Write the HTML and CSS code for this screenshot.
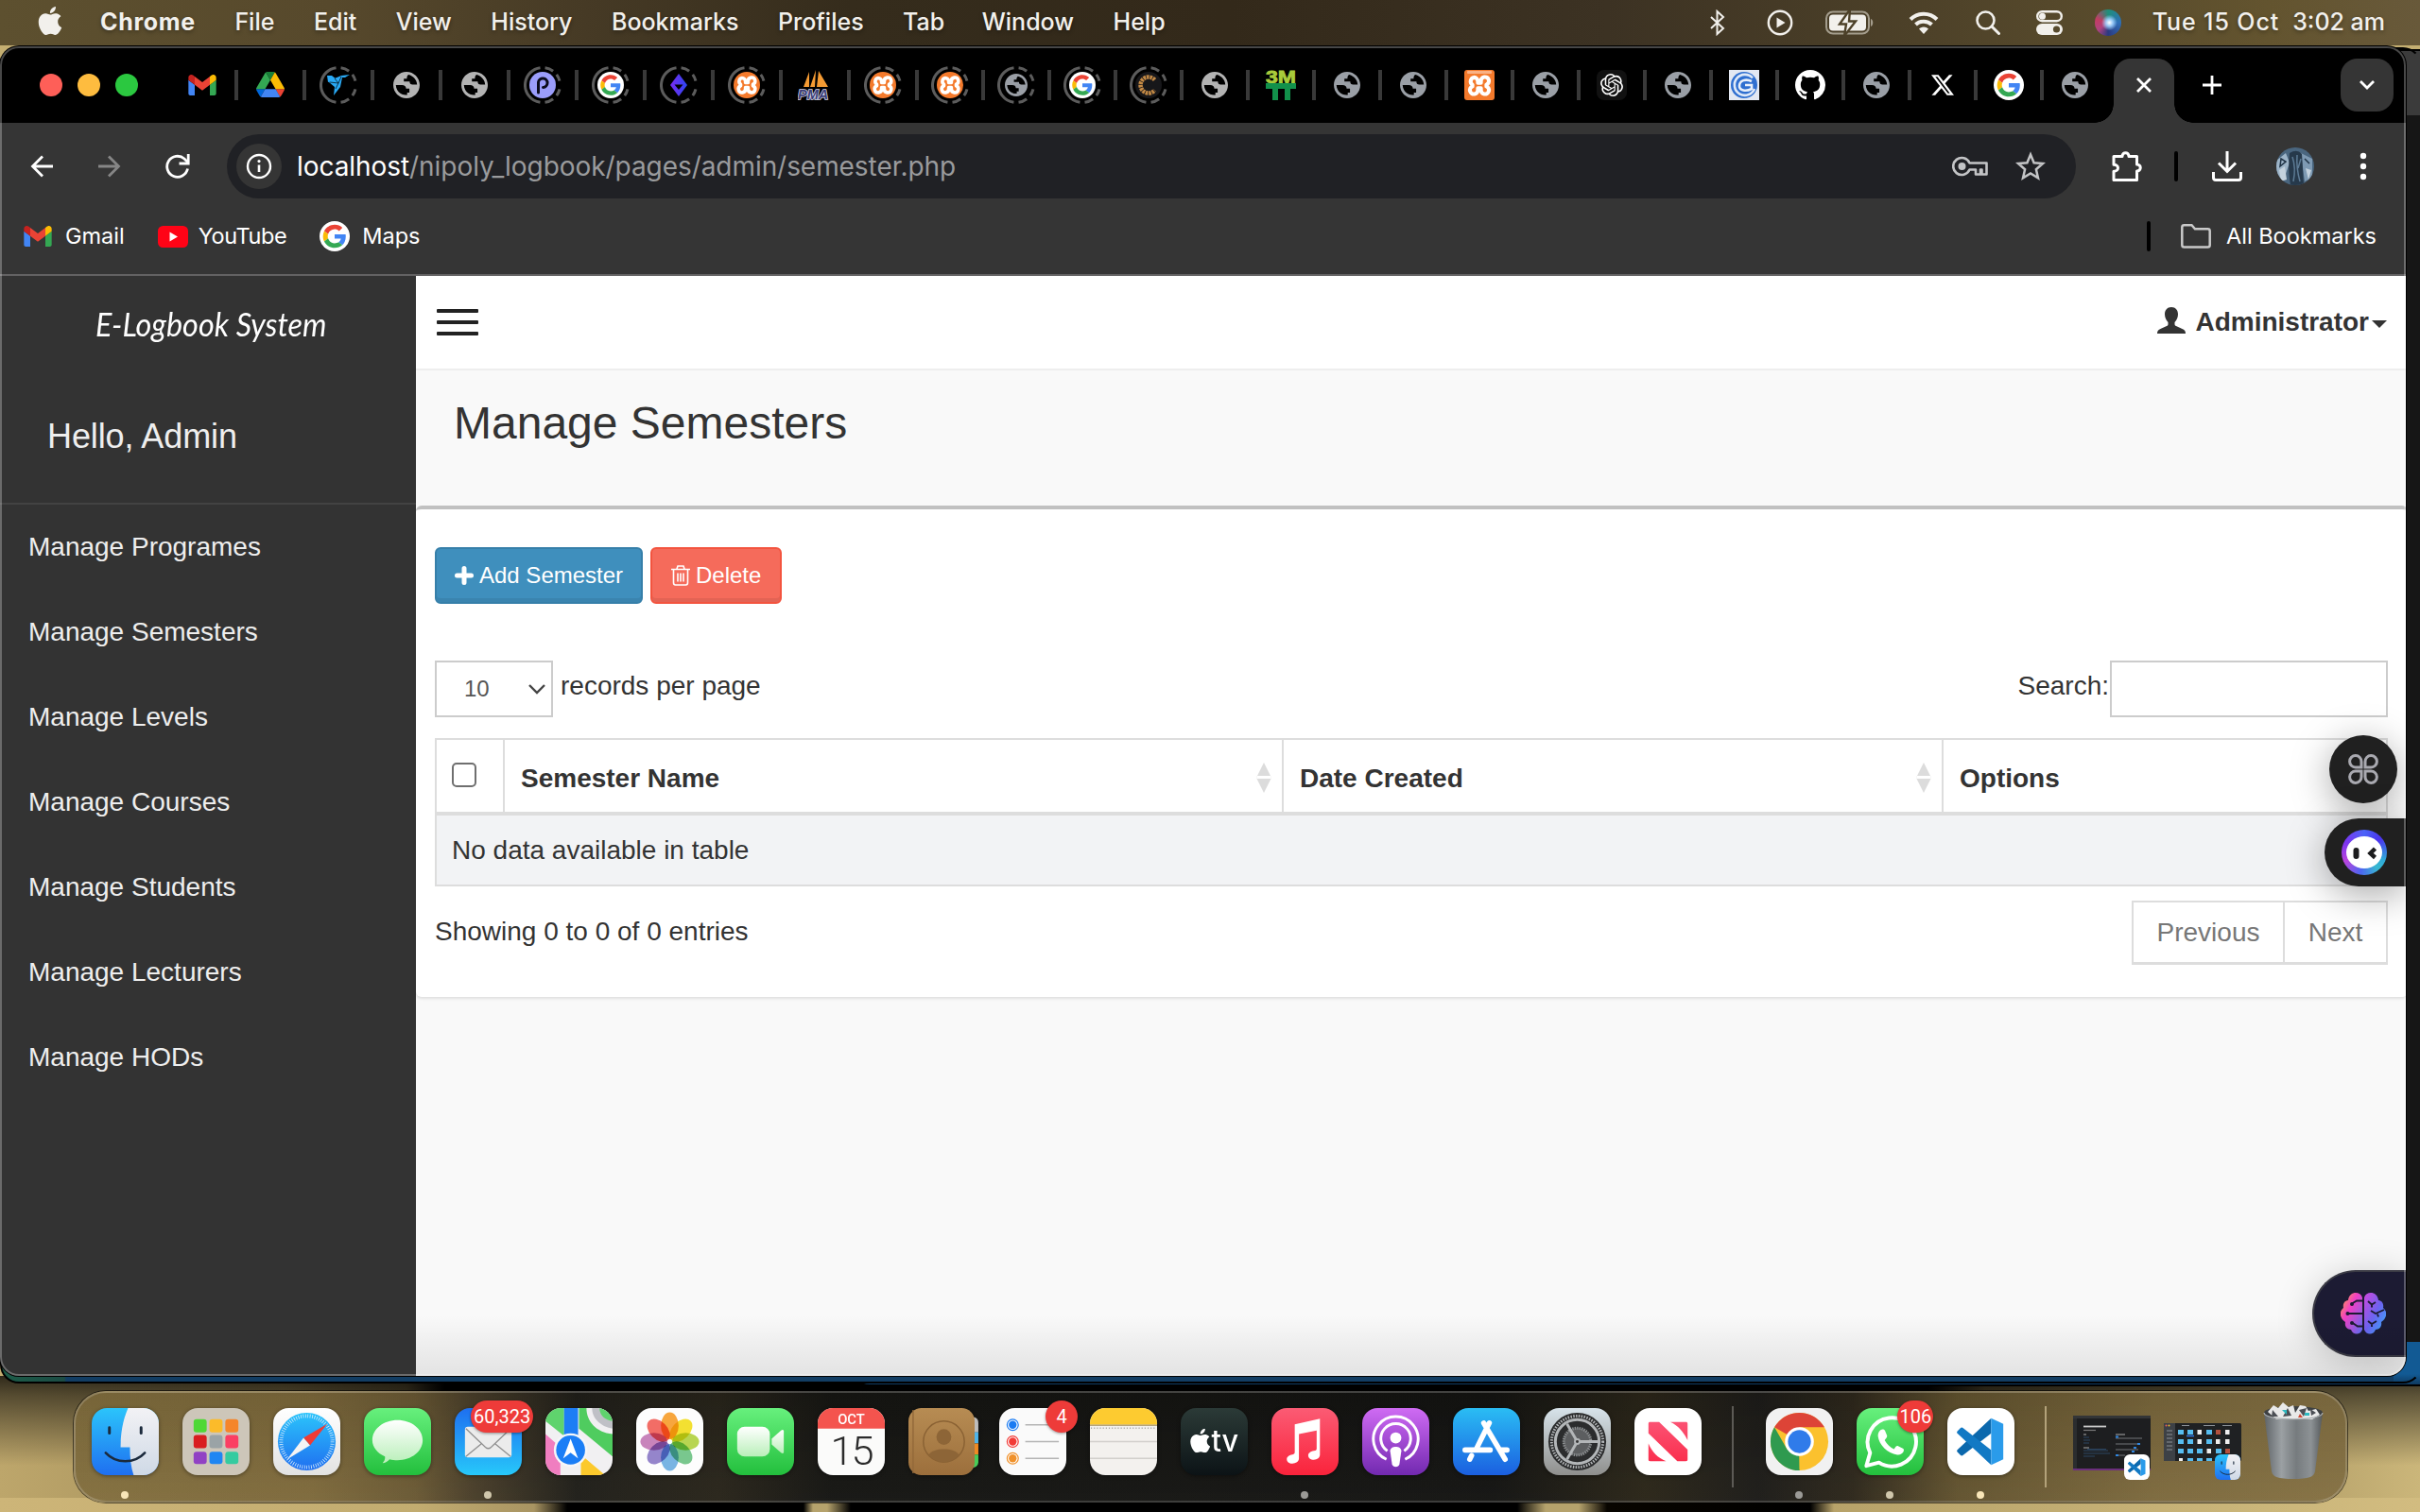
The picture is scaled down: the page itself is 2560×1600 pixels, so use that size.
FILE: index.html
```html
<!DOCTYPE html>
<html lang="en">
<head>
<meta charset="utf-8">
<title>Manage Semesters</title>
<link rel="stylesheet" href="styles.css">
</head>
<body>
<svg class="defs" width="0" height="0">
  <defs>
    <linearGradient id="gBlue" x1="0" y1="0" x2="0" y2="1"><stop offset="0" stop-color="#2bc4fb"/><stop offset="1" stop-color="#1f6ff0"/></linearGradient>
    <linearGradient id="gFace" x1="0" y1="0" x2="0" y2="1"><stop offset="0" stop-color="#f2f2f5"/><stop offset="1" stop-color="#cfd9e6"/></linearGradient>
    <linearGradient id="gGreen" x1="0" y1="0" x2="0" y2="1"><stop offset="0" stop-color="#67f07d"/><stop offset="1" stop-color="#23bf3d"/></linearGradient>
    <linearGradient id="gMail" x1="0" y1="0" x2="0" y2="1"><stop offset="0" stop-color="#1e6ff0"/><stop offset="1" stop-color="#27c8fa"/></linearGradient>
    <linearGradient id="gWhite" x1="0" y1="0" x2="0" y2="1"><stop offset="0" stop-color="#ffffff"/><stop offset="1" stop-color="#e2e2e2"/></linearGradient>
    <linearGradient id="gBubble" x1="0" y1="0" x2="0" y2="1"><stop offset="0" stop-color="#ffffff"/><stop offset="1" stop-color="#b9efb9"/></linearGradient>
    <linearGradient id="gMusic" x1="0" y1="0" x2="0" y2="1"><stop offset="0" stop-color="#fb5b74"/><stop offset="1" stop-color="#fa233b"/></linearGradient>
    <linearGradient id="gPod" x1="0" y1="0" x2="0" y2="1"><stop offset="0" stop-color="#cf6bf3"/><stop offset="1" stop-color="#7229b0"/></linearGradient>
    <linearGradient id="gStore" x1="0" y1="0" x2="0" y2="1"><stop offset="0" stop-color="#2abdf4"/><stop offset="1" stop-color="#1b5fe0"/></linearGradient>
    <linearGradient id="gTv" x1="0" y1="0" x2="0" y2="1"><stop offset="0" stop-color="#2b3a37"/><stop offset="1" stop-color="#0c1316"/></linearGradient>
    <linearGradient id="gSet" x1="0" y1="0" x2="0" y2="1"><stop offset="0" stop-color="#d7e3ea"/><stop offset="1" stop-color="#8f8f8d"/></linearGradient>
    <linearGradient id="gNews" x1="0" y1="0" x2="0" y2="1"><stop offset="0" stop-color="#fb5273"/><stop offset="1" stop-color="#fa2f4e"/></linearGradient>
    <linearGradient id="gBook" x1="0" y1="0" x2="0" y2="1"><stop offset="0" stop-color="#b78c53"/><stop offset="1" stop-color="#9c6f3c"/></linearGradient>
    <linearGradient id="gBin" x1="0" y1="0" x2="1" y2="0"><stop offset="0" stop-color="#5e6367"/><stop offset=".3" stop-color="#9ba0a3"/><stop offset=".55" stop-color="#767b7e"/><stop offset=".8" stop-color="#8d9295"/><stop offset="1" stop-color="#55595c"/></linearGradient>
    <linearGradient id="gBrainL" x1="0" y1="0" x2="1" y2="1"><stop offset="0" stop-color="#fdb02f"/><stop offset=".4" stop-color="#f23fc4"/><stop offset="1" stop-color="#5b6ef5"/></linearGradient>
    <linearGradient id="gBrainR" x1="0" y1="0" x2="1" y2="1"><stop offset="0" stop-color="#d047dc"/><stop offset=".5" stop-color="#6d63f1"/><stop offset="1" stop-color="#32b4fb"/></linearGradient>
    <linearGradient id="gGem" x1="0" y1="0" x2="1" y2="0"><stop offset="0" stop-color="#7a2cf0"/><stop offset="1" stop-color="#2c46f2"/></linearGradient>

    <symbol id="globe" viewBox="2 2 20 20"><path d="M12 2C6.480 2 2 6.480 2 12s4.480 10 10 10 10-4.480 10-10S17.520 2 12 2zM4 12l4.600 0c1.900 0 3 .9 3.100 2.700l2.500 0v3l-1.700 0v1.800C8 20.100 4.100 16.500 4 12zM13.500 4.200C17 5 19.800 8 20 11.600h-3.400c-1.500 0-2.200-.7-2.200-2.300H10V7.200h2.300c0-1.500.2-2.300 1.200-3z" fill="currentColor" fill-rule="evenodd"/></symbol>
    <symbol id="google" viewBox="0 0 48 48"><circle cx="24" cy="24" r="24" fill="#fff"/><g transform="translate(5.500 5.500) scale(.77)"><path fill="#EA4335" d="M24 9.500c3.540 0 6.710 1.220 9.210 3.600l6.850-6.850C35.900 2.380 30.470 0 24 0 14.620 0 6.510 5.380 2.560 13.220l7.980 6.190C12.430 13.720 17.740 9.500 24 9.500z"/><path fill="#4285F4" d="M46.980 24.550c0-1.570-.15-3.090-.38-4.550H24v9.020h12.940c-.58 2.960-2.260 5.480-4.780 7.180l7.730 6c4.510-4.180 7.090-10.360 7.090-17.650z"/><path fill="#FBBC05" d="M10.530 28.590c-.48-1.450-.76-2.990-.76-4.590s.27-3.140.76-4.590l-7.980-6.190C.92 16.460 0 20.120 0 24c0 3.880.92 7.540 2.560 10.780l7.970-6.190z"/><path fill="#34A853" d="M24 48c6.480 0 11.930-2.130 15.890-5.810l-7.730-6c-2.150 1.450-4.920 2.300-8.160 2.300-6.260 0-11.570-4.220-13.470-9.910l-7.980 6.190C6.510 42.620 14.620 48 24 48z"/></g></symbol>
    <symbol id="gmail" viewBox="52 42 88 66"><path fill="#4285f4" d="M58 108h14V74L52 59v43c0 3.320 2.690 6 6 6"/><path fill="#34a853" d="M120 108h14c3.320 0 6-2.690 6-6V59l-20 15"/><path fill="#fbbc04" d="M120 48v26l20-15v-8c0-7.420-8.470-11.650-14.400-7.200"/><path fill="#ea4335" d="M72 74V48l24 18 24-18v26L96 92"/><path fill="#c5221f" d="M52 51v8l20 15V48l-5.600-4.200c-5.940-4.450-14.400-.22-14.400 7.200"/></symbol>
    <symbol id="drive" viewBox="0 0 87.300 78"><path fill="#0066da" d="m6.600 66.850 3.850 6.650c.8 1.400 1.950 2.500 3.300 3.300l13.750-23.800h-27.500c0 1.550.4 3.100 1.200 4.500z"/><path fill="#34a853" d="m43.650 25-13.750-23.800c-1.350.8-2.500 1.900-3.300 3.300l-25.400 44a9.060 9.060 0 0 0-1.200 4.500h27.500z"/><path fill="#ea4335" d="m73.550 76.800c1.350-.8 2.500-1.900 3.300-3.300l1.600-2.750 7.650-13.250c.8-1.400 1.200-2.950 1.200-4.500h-27.502l5.852 11.500z"/><path fill="#188038" d="m43.650 25 13.750-23.800c-1.350-.8-2.900-1.200-4.500-1.200h-18.500c-1.600 0-3.150.45-4.500 1.200z"/><path fill="#4285f4" d="m59.800 53h-32.300l-13.750 23.800c1.350.8 2.900 1.200 4.500 1.200h50.800c1.600 0 3.150-.45 4.500-1.200z"/><path fill="#fbbc04" d="m73.400 26.500-12.700-22c-.8-1.400-1.950-2.500-3.300-3.300l-13.750 23.800 16.150 28h27.450c0-1.550-.4-3.100-1.200-4.500z"/></symbol>
    <symbol id="bird" viewBox="0 0 28 26"><path fill="#29a9f5" d="M2 3l5 0 5 4-9 3zM10 6l7-3 9-1-5 3h-3l-2 10-7 9 1-9-6-5z"/><path d="M10 6l4 5 3-7M5 10l9 1-3 6" stroke="#000" stroke-width=".7" fill="none"/></symbol>
    <symbol id="pee" viewBox="0 0 28 28"><circle cx="14" cy="14" r="14" fill="#9b9dfb"/><path d="M9.500 22V11a4.800 4.800 0 1 1 5 5.500" stroke="#0b0b1c" stroke-width="3" fill="none" stroke-linecap="round"/></symbol>
    <symbol id="gem" viewBox="0 0 20 26"><path d="M10 1l9 12-9 12L1 13z" fill="url(#gGem)"/><path d="M5.500 12.500h9L10 18z" fill="#000"/></symbol>
    <symbol id="xshape" viewBox="0 0 28 28"><path d="M9 6.500a3.700 3.700 0 0 1 3.600 3.500v1.500h2.800V10A3.700 3.700 0 1 1 20.500 13.200v1.600A3.700 3.700 0 1 1 15.400 18v-1.500h-2.800V18A3.700 3.700 0 1 1 7.500 14.800v-1.600A3.700 3.700 0 0 1 9 6.500z" fill="none" stroke="#fff" stroke-width="3.600" stroke-linejoin="round"/></symbol>
    <symbol id="xamppRound" viewBox="0 0 28 28"><circle cx="14" cy="14" r="14" fill="#f47a2c"/><use href="#xshape"/></symbol>
    <symbol id="xampp" viewBox="0 0 32 32"><rect width="32" height="32" rx="3" fill="#f47a2c"/><rect x="3" y="1" width="26" height="3" rx="1" fill="#f9b184"/><use href="#xshape" x="0" y="0" width="32" height="33"/></symbol>
    <symbol id="pma" viewBox="0 0 36 36"><path d="M6 20L12 4v16zM13 20L19 2l-1 18zM20 20l2-17 10 17z" fill="#f59b33"/><text x="0" y="33" font-family="Liberation Sans" font-weight="700" font-style="italic" font-size="14.500" fill="#3c3f78" stroke="#d7d7ea" stroke-width="1.600" paint-order="stroke">PMA</text></symbol>
    <symbol id="coin" viewBox="0 0 28 28"><circle cx="14" cy="14" r="14" fill="#17171a"/><path d="M20.500 8.500a8.500 8.500 0 1 0 0 11" stroke="#c48a45" stroke-width="4.500" fill="none" stroke-dasharray="2.600 .8"/></symbol>
    <symbol id="threem" viewBox="0 0 32 32"><text x="0" y="13.500" textLength="32" lengthAdjust="spacingAndGlyphs" font-family="Liberation Sans" font-weight="700" font-size="18.500" fill="#a9cb3b" stroke="#a9cb3b" stroke-width=".8">3M</text><path d="M0 14h32v6h-6v12h-6V20h-7v12H7V20H0z" fill="#12914b"/></symbol>
    <symbol id="openai" viewBox="-4 -4 32 32"><rect x="-4" y="-4" width="32" height="32" rx="8" fill="#111"/><path fill="#fff" d="M22.282 9.821a5.985 5.985 0 0 0-.516-4.910 6.046 6.046 0 0 0-6.510-2.900A6.065 6.065 0 0 0 4.981 4.182a5.985 5.985 0 0 0-3.998 2.900 6.046 6.046 0 0 0 .743 7.097 5.980 5.980 0 0 0 .511 4.911 6.051 6.051 0 0 0 6.515 2.900A5.985 5.985 0 0 0 13.260 24a6.056 6.056 0 0 0 5.772-4.206 5.989 5.989 0 0 0 3.998-2.900 6.056 6.056 0 0 0-.748-7.073zm-9.022 12.608a4.476 4.476 0 0 1-2.876-1.041l.142-.08 4.778-2.758a.795.795 0 0 0 .393-.681v-6.737l2.020 1.169a.071.071 0 0 1 .038.052v5.583a4.504 4.504 0 0 1-4.495 4.494zm-9.661-4.125a4.471 4.471 0 0 1-.535-3.014l.142.085 4.783 2.758a.771.771 0 0 0 .781 0l5.843-3.369v2.332a.080.080 0 0 1-.033.062L9.740 19.950a4.499 4.499 0 0 1-6.141-1.646zM2.341 7.896a4.485 4.485 0 0 1 2.366-1.973V11.600a.766.766 0 0 0 .388.677l5.814 3.354-2.020 1.169a.076.076 0 0 1-.071 0l-4.830-2.787A4.504 4.504 0 0 1 2.341 7.872zm16.596 3.856l-5.833-3.388L15.119 7.200a.076.076 0 0 1 .071 0l4.830 2.791a4.494 4.494 0 0 1-.677 8.104v-5.677a.79.79 0 0 0-.407-.667zm2.011-3.023l-.142-.085-4.774-2.782a.776.776 0 0 0-.785 0L9.409 9.230V6.897a.066.066 0 0 1 .028-.062l4.830-2.787a4.499 4.499 0 0 1 6.680 4.660zM8.307 12.863l-2.020-1.164a.080.080 0 0 1-.038-.057V6.074a4.499 4.499 0 0 1 7.376-3.454l-.142.081L8.704 5.459a.795.795 0 0 0-.393.681zm1.098-2.365l2.602-1.500 2.607 1.500v2.999l-2.597 1.500-2.607-1.500z"/></symbol>
    <symbol id="swirl" viewBox="0 0 32 32"><rect width="32" height="32" fill="#e3e8f2"/><circle cx="16" cy="16" r="14" fill="#2f6fd0"/><path d="M25 8.500A11 11 0 1 0 27 20" fill="none" stroke="#dfe9f8" stroke-width="2.600"/><path d="M24 12c-6-3-13-1-13 5 0 5 7 6 13 3v-4h-7" fill="none" stroke="#e9f0fa" stroke-width="2.600"/></symbol>
    <symbol id="github" viewBox="0 0 16 16"><path fill="#fff" d="M8 0C3.580 0 0 3.580 0 8c0 3.540 2.290 6.530 5.470 7.590.4.070.55-.17.55-.38 0-.19-.01-.82-.01-1.490-2.010.37-2.530-.49-2.690-.94-.09-.23-.48-.94-.82-1.130-.28-.15-.68-.52-.01-.53.63-.01 1.080.58 1.230.82.72 1.210 1.870.87 2.330.66.070-.52.28-.87.51-1.070-1.780-.2-3.640-.89-3.640-3.950 0-.87.31-1.590.82-2.150-.08-.2-.36-1.020.08-2.120 0 0 .67-.21 2.200.82.64-.18 1.320-.27 2-.27.68 0 1.360.09 2 .27 1.530-1.040 2.200-.82 2.200-.82.44 1.100.16 1.920.08 2.120.51.56.82 1.270.82 2.150 0 3.070-1.870 3.750-3.650 3.950.29.25.54.73.54 1.480 0 1.070-.01 1.930-.01 2.200 0 .21.15.46.55.38A8.013 8.013 0 0 0 16 8c0-4.420-3.580-8-8-8z"/></symbol>
    <symbol id="ex" viewBox="0 0 24 24"><path fill="#fff" d="M18.901 1.153h3.680l-8.040 9.190L24 22.846h-7.406l-5.800-7.584-6.638 7.584H.474l8.600-9.830L0 1.154h7.594l5.243 6.932ZM17.610 20.644h2.039L6.486 3.240H4.298Z"/></symbol>
    <symbol id="ring" viewBox="0 0 40 40"><circle cx="20" cy="20" r="18.500" fill="none" stroke="#5c5c5c" stroke-width="3" pathLength="360" stroke-dasharray="29 16 23 28 23 16 29 16 164 16" transform="rotate(-82 20 20)"/></symbol>
    <symbol id="apple" viewBox="0 0 24 24"><path fill="currentColor" d="M12.152 6.896c-.948 0-2.415-1.078-3.960-1.040-2.040.027-3.910 1.183-4.961 3.014-2.117 3.675-.546 9.103 1.519 12.090 1.013 1.454 2.208 3.090 3.792 3.039 1.520-.065 2.090-.987 3.935-.987 1.831 0 2.350.987 3.960.948 1.637-.026 2.676-1.480 3.676-2.948 1.156-1.688 1.636-3.325 1.662-3.415-.039-.013-3.182-1.221-3.220-4.857-.026-3.040 2.480-4.494 2.597-4.559-1.429-2.090-3.623-2.324-4.390-2.376-2-.156-3.675 1.090-4.610 1.090zM15.530 3.830c.843-1.012 1.400-2.427 1.245-3.830-1.207.052-2.662.805-3.532 1.818-.78.896-1.454 2.338-1.273 3.714 1.338.104 2.715-.688 3.559-1.701"/></symbol>

    <clipPath id="tileClip"><rect width="72" height="72" rx="16.500"/></clipPath>
    <symbol id="finder" viewBox="0 0 72 72"><g clip-path="url(#tileClip)"><rect width="72" height="72" fill="url(#gBlue)"/><path d="M39 0C33 14 31 28 31 42h10c0 11 1 21 4 30h27V0z" fill="url(#gFace)"/></g><path d="M19 21v6M53 21v6" stroke="#1b2a3c" stroke-width="3" stroke-linecap="round"/><path d="M15 48c11 12 31 12 42 0" fill="none" stroke="#1b2a3c" stroke-width="2.600" stroke-linecap="round"/></symbol>
    <symbol id="vscode" viewBox="0 0 72 72"><rect width="72" height="72" rx="16.500" fill="#fff"/><path d="M47 11L11 44.500c-1 1-1 2 0 3l3 3c1 .8 2 .8 3 0L47 27z" fill="#0b68ad"/><path d="M47 61L11 27.500c-1-1-1-2 0-3l3-3c1-.8 2-.8 3 0L47 45z" fill="#1279c4"/><path d="M47 11l13 6v38l-13 6z" fill="#2a9bea"/></symbol>
  </defs>
</svg>

<div class="desktop">

  <header class="menubar">
    <svg class="mb-apple" width="30" height="34"><use href="#apple"/></svg>
    <nav class="mb-items">
      <b>Chrome</b><span>File</span><span>Edit</span><span>View</span><span>History</span><span>Bookmarks</span><span>Profiles</span><span class="tight">Tab</span><span>Window</span><span>Help</span>
    </nav>
    <div class="mb-tray">
      <svg class="t-bt" width="20" height="28" viewBox="0 0 20 28"><path d="M3 8l13 12-6.500 6V2L16 8 3 20" fill="none" stroke="currentColor" stroke-width="2"/></svg>
      <svg class="t-play" width="28" height="28" viewBox="0 0 28 28"><circle cx="14" cy="14" r="12.200" fill="none" stroke="currentColor" stroke-width="2.400"/><path d="M10.500 8.500v11l9-5.500z" fill="currentColor"/></svg>
      <svg class="t-bat" width="51" height="26" viewBox="0 0 51 26"><rect x="1" y="1.500" width="45" height="23" rx="7" fill="none" stroke="#a49d8d" stroke-width="2"/><path d="M48 9c3 1 3 7 0 8z" fill="#a49d8d"/><rect x="4" y="4.500" width="39" height="17" rx="4" fill="currentColor"/><path d="M26-1L15 14.500h7L20 27l12-15.500h-7z" fill="currentColor" stroke="#4d4129" stroke-width="2.400"/></svg>
      <svg class="t-wifi" width="32" height="24" viewBox="0 0 32 24"><path d="M2 8.500a20 20 0 0 1 28 0M7.500 14a12.500 12.500 0 0 1 17 0" fill="none" stroke="currentColor" stroke-width="4"/><path d="M16 24l-5-5.500a7.500 7.500 0 0 1 10 0z" fill="currentColor"/></svg>
      <svg class="t-find" width="26" height="26" viewBox="0 0 26 26"><circle cx="10.500" cy="10.500" r="9" fill="none" stroke="currentColor" stroke-width="2.600"/><path d="M17 17l7.500 7.500" stroke="currentColor" stroke-width="3" stroke-linecap="round"/></svg>
      <svg class="t-cc" width="28" height="26" viewBox="0 0 28 26"><rect x="1.200" y="1.200" width="25.600" height="10" rx="5" fill="none" stroke="currentColor" stroke-width="2.400"/><circle cx="6.500" cy="6.200" r="3.500" fill="currentColor"/><rect y="14" width="28" height="12" rx="6" fill="currentColor"/><circle cx="21.500" cy="20" r="3.600" fill="#574a2d"/></svg>
      <span class="t-siri"></span>
      <span class="mb-date">Tue 15 Oct</span><span class="mb-time">3:02 am</span>
    </div>
  </header>

  <div class="backwin far"></div>
  <div class="backwin near"></div>

  <section class="chrome">
    <div class="tabstrip">
      <div class="lights"><i class="red"></i><i class="amber"></i><i class="green"></i></div>
      <div class="tabs">
        <span class="tab"><svg width="30" height="22"><use href="#gmail"/></svg></span>
        <span class="tab"><svg width="30" height="27"><use href="#drive"/></svg></span>
        <span class="tab sleeping"><svg class="ring"><use href="#ring"/></svg><svg width="28" height="26"><use href="#bird"/></svg></span>
        <span class="tab light"><svg width="28" height="28"><use href="#globe"/></svg></span>
        <span class="tab light"><svg width="28" height="28"><use href="#globe"/></svg></span>
        <span class="tab sleeping"><svg class="ring"><use href="#ring"/></svg><svg width="28" height="28"><use href="#pee"/></svg></span>
        <span class="tab sleeping"><svg class="ring"><use href="#ring"/></svg><svg width="28" height="28"><use href="#google"/></svg></span>
        <span class="tab sleeping"><svg class="ring"><use href="#ring"/></svg><svg width="20" height="26"><use href="#gem"/></svg></span>
        <span class="tab sleeping"><svg class="ring"><use href="#ring"/></svg><svg width="28" height="28"><use href="#xamppRound"/></svg></span>
        <span class="tab"><svg width="36" height="36"><use href="#pma"/></svg></span>
        <span class="tab sleeping"><svg class="ring"><use href="#ring"/></svg><svg width="28" height="28"><use href="#xamppRound"/></svg></span>
        <span class="tab slim sleeping"><svg class="ring"><use href="#ring"/></svg><svg width="28" height="28"><use href="#xamppRound"/></svg></span>
        <span class="tab slim sleeping"><svg class="ring"><use href="#ring"/></svg><svg width="24" height="24"><use href="#globe"/></svg></span>
        <span class="tab slim sleeping"><svg class="ring"><use href="#ring"/></svg><svg width="28" height="28"><use href="#google"/></svg></span>
        <span class="tab slim sleeping"><svg class="ring"><use href="#ring"/></svg><svg width="28" height="28"><use href="#coin"/></svg></span>
        <span class="tab slim light"><svg width="28" height="28"><use href="#globe"/></svg></span>
        <span class="tab slim"><svg width="32" height="32"><use href="#threem"/></svg></span>
        <span class="tab slim"><svg width="28" height="28"><use href="#globe"/></svg></span>
        <span class="tab slim"><svg width="28" height="28"><use href="#globe"/></svg></span>
        <span class="tab slim"><svg width="32" height="32"><use href="#xampp"/></svg></span>
        <span class="tab slim"><svg width="28" height="28"><use href="#globe"/></svg></span>
        <span class="tab slim"><svg width="32" height="32"><use href="#openai"/></svg></span>
        <span class="tab slim"><svg width="28" height="28"><use href="#globe"/></svg></span>
        <span class="tab slim"><svg width="32" height="32"><use href="#swirl"/></svg></span>
        <span class="tab slim"><svg width="32" height="32"><use href="#github"/></svg></span>
        <span class="tab slim"><svg width="28" height="28"><use href="#globe"/></svg></span>
        <span class="tab slim"><svg width="24" height="26"><use href="#ex"/></svg></span>
        <span class="tab slim"><svg width="32" height="32"><use href="#google"/></svg></span>
        <span class="tab slim last"><svg width="28" height="28"><use href="#globe"/></svg></span>
      </div>
      <div class="tab-active"><svg width="16" height="16" viewBox="0 0 16 16"><path d="M1 1l14 14M15 1L1 15" stroke="#fff" stroke-width="2.800"/></svg></div>
      <svg class="newtab" width="20" height="20" viewBox="0 0 20 20"><path d="M10 0v20M0 10h20" stroke="#fff" stroke-width="2.800"/></svg>
      <div class="tabsearch"><svg width="16" height="10" viewBox="0 0 16 10"><path d="M1 1l7 7 7-7" fill="none" stroke="#fff" stroke-width="2.800"/></svg></div>
    </div>

    <div class="toolbar">
      <svg class="nav" width="24" height="24" viewBox="0 0 24 24"><path d="M24 12H3M13 1.500L2.500 12 13 22.500" fill="none" stroke="#fff" stroke-width="2.800"/></svg>
      <svg class="nav dim" width="24" height="24" viewBox="0 0 24 24"><path d="M0 12h21M11 1.500L21.500 12 11 22.500" fill="none" stroke="#868686" stroke-width="2.800"/></svg>
      <svg class="nav" width="26" height="26" viewBox="0 0 26 26"><path d="M23.500 15.500A11 11 0 1 1 20 5l4 4" fill="none" stroke="#fff" stroke-width="2.800"/><path d="M24.200 0v10H14.500" fill="none" stroke="#fff" stroke-width="2.800"/></svg>
      <div class="omnibox">
        <span class="siteinfo"><svg width="28" height="28" viewBox="0 0 28 28"><circle cx="14" cy="14" r="12" fill="none" stroke="#fff" stroke-width="2.400"/><path d="M14 12.500v7.500" stroke="#fff" stroke-width="2.600"/><circle cx="14" cy="8.600" r="1.600" fill="#fff"/></svg></span>
        <span class="url"><em>localhost</em>/nipoly_logbook/pages/admin/semester.php</span>
        <svg class="key" width="38" height="22" viewBox="0 0 38 22"><path d="M18.500 7.500a9 9 0 1 0 0 7H25v5h5v-5h1.500v5h5V7.500z" fill="none" stroke="#c3c4c6" stroke-width="2.600" stroke-linejoin="round"/><circle cx="10.500" cy="11" r="4" fill="#c3c4c6"/></svg>
        <svg class="star" width="32" height="32" viewBox="0 0 32 32"><path d="M16 3.500l3.600 8.700 9.400.8-7.100 6.200 2.100 9.200-8-4.900-8 4.900 2.100-9.200L3 13l9.400-.8z" fill="none" stroke="#c3c4c6" stroke-width="2.500"/></svg>
      </div>
      <svg class="puzzle" width="34" height="34" viewBox="0 0 34 34"><path d="M3 6.500h9c0-5 7-5 7 0h8.500V15c5 0 5 7 0 7v9.500H3v-9.300c6 0 6-7 0-7z" fill="none" stroke="#fff" stroke-width="3" stroke-linejoin="round"/></svg>
      <i class="bar"></i>
      <svg class="dl" width="32" height="32" viewBox="0 0 32 32"><path d="M16 0v21M7 12.500l9 9 9-9M1.500 22v6c0 1.500.8 2.500 2.500 2.500h24c1.700 0 2.500-1 2.500-2.500v-6" fill="none" stroke="#fff" stroke-width="3"/></svg>
      <svg class="avatar" width="40" height="40" viewBox="0 0 40 40"><defs><clipPath id="av"><circle cx="20" cy="20" r="20"/></clipPath></defs><g clip-path="url(#av)"><rect width="40" height="40" fill="#4a667f"/><path d="M0 14l10-8 4 10-6 18H0z" fill="#9db4c8"/><path d="M26 6l12 6v20l-8 4z" fill="#7e9ab3"/><path d="M14 6q8-5 13 1l2 33H15q-3-18-1-34z" fill="#26394b"/><path d="M17 10q4 12 1 26M22 8q-1 14 3 28M26 12l-3 10" stroke="#5d7b95" stroke-width="1.500" fill="none"/><path d="M3 24l6-4 2 14-6 2zM31 22l6 2-3 10z" fill="#c4d2de"/><path d="M5 12l5 3-6 5zM30 12l5 5" stroke="#1f3346" stroke-width="1.500" fill="none"/></g></svg>
      <svg class="kebab" width="8" height="30" viewBox="0 0 8 30"><g fill="#fff"><circle cx="4" cy="4" r="3.200"/><circle cx="4" cy="15" r="3.200"/><circle cx="4" cy="26" r="3.200"/></g></svg>
    </div>

    <div class="bookmarks">
      <a class="bm"><svg width="30" height="22"><use href="#gmail"/></svg>Gmail</a>
      <a class="bm yt"><svg width="32" height="23" viewBox="0 0 32 23"><rect width="32" height="23" rx="5.500" fill="#ff0316"/><path d="M12.500 6.500v10l8.500-5z" fill="#fff"/></svg>YouTube</a>
      <a class="bm mp"><svg width="32" height="32"><use href="#google"/></svg>Maps</a>
      <i class="bar"></i>
      <a class="bm all"><svg width="32" height="26" viewBox="0 0 32 26"><path d="M1.300 3.500c0-1.300.7-2.200 2.200-2.200h8l3.500 4h13.500c1.500 0 2.200.8 2.200 2.200v14.800c0 1.500-.7 2.300-2.200 2.300h-25c-1.500 0-2.200-.8-2.200-2.300z" fill="none" stroke="#c9c9c9" stroke-width="2.500"/></svg>All Bookmarks</a>
    </div>

    <div class="page">
      <aside class="sidebar">
        <div class="brand"><span>E-Logbook System</span></div>
        <div class="hello">Hello, Admin</div>
        <ul class="menu">
          <li>Manage Programes</li><li>Manage Semesters</li><li>Manage Levels</li><li>Manage Courses</li><li>Manage Students</li><li>Manage Lecturers</li><li>Manage HODs</li>
        </ul>
      </aside>
      <main class="content">
        <div class="topnav">
          <div class="burger"><i></i><i></i><i></i></div>
          <div class="user"><svg width="30" height="28" viewBox="0 0 30 28"><path d="M15 0c4.500 0 7 3.200 7 7.500 0 3.500-1.500 6.500-3.500 8.500v2c0 1 .5 1.600 1.500 2l7 3.200c2 .9 3 2 3 4.800H0c0-2.800 1-3.900 3-4.800L10 20c1-.4 1.500-1 1.500-2v-2C9.500 14 8 11 8 7.500 8 3.200 10.500 0 15 0z" fill="#333"/></svg><b>Administrator</b><i class="caret"></i></div>
        </div>
        <h1>Manage Semesters</h1>
        <div class="card">
          <div class="actions">
            <button class="btn add"><svg width="20" height="20" viewBox="0 0 20 20"><path d="M10 2.500v15M2.500 10h15" stroke="#fff" stroke-width="5" stroke-linecap="round"/></svg>Add Semester</button>
            <button class="btn del"><svg width="20" height="22" viewBox="0 0 20 22"><path d="M0 4.500h20M6 4l1-3h6l1 3M2.500 5v13.500c0 1.500.7 2.500 2 2.500h11c1.300 0 2-1 2-2.500V5M7 8.500v9M10 8.500v9M13 8.500v9" fill="none" stroke="#fff" stroke-width="1.600"/></svg>Delete</button>
          </div>
          <div class="controls">
            <div class="select"><span>10</span><svg width="18" height="11" viewBox="0 0 18 11"><path d="M1 1l8 8 8-8" fill="none" stroke="#444" stroke-width="2.400"/></svg></div>
            <span>records per page</span>
            <label>Search:<span class="field"></span></label>
          </div>
          <div class="table">
            <div class="thead">
              <div class="cell check"><span class="box"></span></div>
              <div class="cell">Semester Name<i class="sort"></i></div>
              <div class="cell">Date Created<i class="sort"></i></div>
              <div class="cell">Options</div>
            </div>
            <div class="trow">No data available in table</div>
          </div>
          <div class="foot">
            <span>Showing 0 to 0 of 0 entries</span>
            <div class="pager"><span>Previous</span><span>Next</span></div>
          </div>
        </div>
        <div class="float clover"><svg width="32" height="32" viewBox="0 0 32 32"><g fill="none" stroke="#a9a9b0" stroke-width="3"><path d="M14 14H8a6.200 6.200 0 1 1 6-6zM18 14V8a6.200 6.200 0 1 1 6 6zM14 18v6a6.200 6.200 0 1 1-6-6zM18 18h6a6.200 6.200 0 1 1-6 6z"/></g></svg></div>
        <div class="float robot"><span class="orb"><svg width="38" height="34" viewBox="0 0 38 34"><ellipse cx="19" cy="17" rx="19" ry="17" fill="#fff"/><rect x="7.500" y="12" width="6" height="12" rx="3" fill="#1c1c1e"/><path d="M30.500 13l-5 5 5 4.500" fill="none" stroke="#1c1c1e" stroke-width="4.500"/></svg></span></div>
        <div class="float brain"><svg width="48" height="44" viewBox="0 0 48 44"><path d="M23 5v34c-2 6-10 6-12 0-4 0-7-3-6-8-6-4-7-11-2-15-1-5 2-8 5-8 1-10 13-10 15-3z" fill="url(#gBrainL)"/><path d="M25 5v34c2 6 10 6 12 0 4 0 7-3 6-8 6-4 7-11 2-15 1-5-2-8-5-8-1-10-13-10-15-3z" fill="url(#gBrainR)"/><path d="M23 8.500h-6l-5 3M23 22H8M23 35.500h-5l-6-4M29 9l4 3.500 4-2.500M33 12.500v3M32 19l5 3 9-4M39 22.500l1 3M29 30l4 3 5-3M33 33v3" fill="none" stroke="#1c1b33" stroke-width="1.900"/><g fill="#1c1b33"><circle cx="12" cy="12" r="2"/><circle cx="7.500" cy="22" r="2"/><circle cx="12" cy="32" r="2"/></g></svg></div>
      </main>
    </div>
  </section>

  <footer class="dock">
    <div class="app on bright"><svg><use href="#finder"/></svg></div>
    <div class="app"><svg viewBox="0 0 72 72"><rect width="72" height="72" rx="16.500" fill="#cdc6b9"/><g><rect x="12" y="12" width="14" height="14" rx="3" fill="#4fd836"/><rect x="29" y="12" width="14" height="14" rx="3" fill="#fbbb2a"/><rect x="46" y="12" width="14" height="14" rx="3" fill="#f5852a"/><rect x="12" y="29" width="14" height="14" rx="3" fill="#d91d20"/><rect x="29" y="29" width="14" height="14" rx="3" fill="#9aa3a6"/><rect x="46" y="29" width="14" height="14" rx="3" fill="#fb3f63"/><rect x="12" y="47" width="14" height="13" rx="3" fill="#9142c4"/><rect x="29" y="47" width="14" height="13" rx="3" fill="#1f86f3"/><rect x="46" y="47" width="14" height="13" rx="3" fill="#35cba0"/></g></svg></div>
    <div class="app"><svg viewBox="0 0 72 72"><rect width="72" height="72" rx="16.500" fill="url(#gWhite)"/><circle cx="36" cy="36" r="31" fill="url(#gBlue)"/><circle cx="36" cy="36" r="27.500" fill="none" stroke="#d6ecfb" stroke-width="4" stroke-dasharray=".8 1.700"/><path d="M58 17L32.500 32l7 8z" fill="#ef3b34"/><path d="M15 55l17.500-23 7 8z" fill="#f4f4f4"/></svg></div>
    <div class="app"><svg viewBox="0 0 72 72"><rect width="72" height="72" rx="16.500" fill="url(#gGreen)"/><path d="M36 13c15 0 27 9.500 27 21.500S51 56 36 56c-3 0-6-.4-8.500-1.100C25.500 57 23 59 20 59c2-2 3-4.500 2.500-7C14.500 48.500 9 42 9 34.500 9 22.500 21 13 36 13z" fill="url(#gBubble)"/></svg></div>
    <div class="app on mid"><svg viewBox="0 0 72 72"><rect width="72" height="72" rx="16.500" fill="url(#gMail)"/><rect x="11" y="20" width="50" height="33" rx="3" fill="#ececec"/><path d="M12 22l21 20c2 1.800 4 1.800 6 0l21-20M12 52l17-14M60 52L43 38" fill="none" stroke="#8f8f8f" stroke-width="1.300"/></svg><span class="badge wide">60,323</span></div>
    <div class="app"><svg viewBox="0 0 72 72"><g clip-path="url(#tileClip)"><rect width="72" height="72" fill="#f1f0f2"/><path d="M0 0h20v30L0 14z" fill="#5fd36d"/><path d="M36 0h8c0 14 10 26 28 28v24L36 22z" fill="#4fcc5f"/><path d="M50 0h22v22C60 20 50 12 50 0z" fill="#bfc0c6"/><path d="M58 0h14v14c-8-1-14-6-14-14z" fill="#5fd36d"/><path d="M0 28l16 14v30H0z" fill="#f07ec0"/><path d="M38 50l26 22H38z" fill="#fcc92c"/><path d="M20 0h15v40H20z" fill="#1d7df5"/></g><circle cx="27" cy="45" r="18" fill="#f6f6f8"/><circle cx="27" cy="45" r="15.500" fill="#1b7ef6"/><path d="M27 33l8 21-8-6-8 6z" fill="#fff"/></svg></div>
    <div class="app"><svg viewBox="0 0 72 72"><rect width="72" height="72" rx="16.500" fill="#fdfdfd"/><g class="petals"><ellipse cx="36" cy="19" rx="9.500" ry="14.500" fill="#f9a02d"/><ellipse cx="36" cy="19" rx="9.500" ry="14.500" fill="#f5e01f" transform="rotate(45 36 36)"/><ellipse cx="36" cy="19" rx="9.500" ry="14.500" fill="#b4d442" transform="rotate(90 36 36)"/><ellipse cx="36" cy="19" rx="9.500" ry="14.500" fill="#6fc585" transform="rotate(135 36 36)"/><ellipse cx="36" cy="19" rx="9.500" ry="14.500" fill="#6fb0e3" transform="rotate(180 36 36)"/><ellipse cx="36" cy="19" rx="9.500" ry="14.500" fill="#8d7cc9" transform="rotate(225 36 36)"/><ellipse cx="36" cy="19" rx="9.500" ry="14.500" fill="#c67bb8" transform="rotate(270 36 36)"/><ellipse cx="36" cy="19" rx="9.500" ry="14.500" fill="#f4625a" transform="rotate(315 36 36)"/></g></svg></div>
    <div class="app"><svg viewBox="0 0 72 72"><rect width="72" height="72" rx="16.500" fill="url(#gGreen)"/><rect x="11" y="20" width="35" height="32" rx="8" fill="url(#gBubble)"/><path d="M48 33l10-9c2-1.500 3-.5 3 1v22c0 1.500-1 2.500-3 1l-10-9z" fill="url(#gBubble)"/></svg></div>
    <div class="app"><svg viewBox="0 0 72 72"><rect width="72" height="72" rx="16.500" fill="#fbfbfa"/><path d="M0 22v-5.500C0 7.400 7.400 0 16.500 0h39C64.600 0 72 7.400 72 16.500V22z" fill="#f4544e"/><text x="36" y="17" text-anchor="middle" font-family="Roboto" font-weight="500" font-size="15" fill="#fff">OCT</text><text x="36" y="61" text-anchor="middle" font-family="Roboto" font-weight="300" font-size="44" letter-spacing="-2" fill="#2b2b2b">15</text></svg></div>
    <div class="app"><svg viewBox="0 0 72 72"><path d="M66 10h5c3 1 4 3 4 6v10h-9z" fill="#bdbdbd"/><path d="M66 26h9v12h-9z" fill="#4fb5ea"/><path d="M66 38h9v12h-9z" fill="#f08a24"/><path d="M66 50h9v8c0 3-2 5-5 6h-4z" fill="#48cc58"/><rect width="71" height="72" rx="14" fill="url(#gBook)"/><path d="M5 2v68" stroke="#93693a" stroke-width="1.500"/><circle cx="38" cy="36" r="22" fill="none" stroke="#8a6234" stroke-width="1.500"/><ellipse cx="38" cy="31" rx="8" ry="8.500" fill="#8d6537"/><path d="M22 50c4-8 28-8 32 0-8 11-24 11-32 0z" fill="#8d6537"/></svg></div>
    <div class="app"><svg viewBox="0 0 72 72"><rect width="72" height="72" rx="16.500" fill="#fafafa"/><g fill="#fff" stroke-width="1.200"><circle cx="14.500" cy="18" r="6" stroke="#1b7bf2"/><circle cx="14.500" cy="36" r="6" stroke="#f23b37"/><circle cx="14.500" cy="54" r="6" stroke="#f0912a"/></g><circle cx="14.500" cy="18" r="4.200" fill="#1b7bf2"/><circle cx="14.500" cy="36" r="4.200" fill="#f23b37"/><circle cx="14.500" cy="54" r="4.200" fill="#f0912a"/><path d="M28 18h36M28 36h36M28 54h36" stroke="#b5b5b5" stroke-width="1.400"/></svg><span class="badge round">4</span></div>
    <div class="app"><svg viewBox="0 0 72 72"><rect width="72" height="72" rx="16.500" fill="#f3f1ee"/><path d="M0 18v-1.500C0 7.400 7.400 0 16.500 0h39C64.600 0 72 7.400 72 16.500V18z" fill="#fdcb30"/><path d="M0 18.500h72" stroke="#b5a57c" stroke-width="1.500"/><path d="M1 21.500h70" stroke="#aaa" stroke-width="1.600" stroke-dasharray="1.200 2"/><path d="M0 36h72M0 54h72" stroke="#d2d0cc" stroke-width="1.400"/></svg></div>
    <div class="app"><svg viewBox="0 0 72 72"><rect width="72" height="72" rx="16.500" fill="url(#gTv)"/><g color="#fff"><use href="#apple" x="8" y="22" width="26" height="26"/></g><text x="33" y="47" font-family="Inter" font-weight="500" font-size="32" fill="#fff" textLength="29" lengthAdjust="spacingAndGlyphs">tv</text></svg></div>
    <div class="app on grey"><svg viewBox="0 0 72 72"><rect width="72" height="72" rx="16.500" fill="url(#gMusic)"/><path d="M25 17.500l27-6v38.500c0 3.500-3 5.500-6.500 5.500-7 0-9-8 0-9.500 2.500-.4 3-1.200 3-3V24l-19 4v26c0 3.500-3.500 5.500-7 5.500-7 0-9-8 0-9.500 2-.4 2.500-1.200 2.500-3z" fill="#fff"/></svg></div>
    <div class="app"><svg viewBox="0 0 72 72"><rect width="72" height="72" rx="16.500" fill="url(#gPod)"/><g fill="none" stroke="#fff" stroke-width="3"><path d="M26 55a24 24 0 1 1 20 0"/><path d="M27 46a16 16 0 1 1 18 0"/></g><circle cx="36" cy="32" r="6" fill="#fff"/><path d="M30 46c0-6 12-6 12 0l-2 14c-.8 4-7.200 4-8 0z" fill="#fff"/></svg></div>
    <div class="app"><svg viewBox="0 0 72 72"><rect width="72" height="72" rx="16.500" fill="url(#gStore)"/><g stroke="#fff" stroke-width="5.600" stroke-linecap="round"><path d="M39 16L25 44M33 16l23 39M13 45h27M51 45h7M20 51l-2 4"/></g></svg></div>
    <div class="app"><svg viewBox="0 0 72 72"><rect width="72" height="72" rx="16.500" fill="url(#gSet)"/><circle cx="36" cy="36" r="31" fill="#2b2c2d"/><circle cx="36" cy="36" r="27.500" fill="none" stroke="#b3b6b8" stroke-width="3" stroke-dasharray="1.500 1.400"/><circle cx="36" cy="36" r="23.500" fill="none" stroke="#b3b6b8" stroke-width="3"/><circle cx="36" cy="36" r="14.500" fill="#5c5e60" stroke="#8b8e90" stroke-width="3" stroke-dasharray="1.500 1"/><path d="M36 36h23M36 36L25 17M36 36L25 55" stroke="#b3b6b8" stroke-width="3"/><circle cx="36" cy="36" r="3.500" fill="#b3b6b8"/><circle cx="36" cy="36" r="1.500" fill="#333"/></svg></div>
    <div class="app"><svg viewBox="0 0 72 72"><rect width="72" height="72" rx="16.500" fill="#fff"/><path d="M17 15h9.500L57 44.500V55c0 1.500-.5 2-2 2h-9L15 27V17c0-1.500.5-2 2-2zM38.500 15H55c1.500 0 2 .5 2 2v17.500C53 26 47 19 38.500 15zM15 38c4 9 10 15.500 19 19H17c-1.500 0-2-.5-2-2z" fill="url(#gNews)"/></svg></div>
    <i class="split"></i>
    <div class="app on grey"><svg viewBox="0 0 72 72"><rect width="72" height="72" rx="16.500" fill="#f1f1f1"/><circle cx="36" cy="36" r="31" fill="#fbc12e"/><path d="M36 36L9.200 20.500A31 31 0 0 1 62.800 20.500H36z" fill="#dd4437"/><path d="M9.200 20.500L22.500 43.800 36 51.500 36.500 67A31 31 0 0 1 9.200 20.500z" fill="#2f9a4f"/><path d="M36 67l13.500-23.200L36 50z" fill="#fbc12e"/><circle cx="36" cy="36" r="15.500" fill="#fff"/><circle cx="36" cy="36" r="12.300" fill="#2f7bea"/></svg></div>
    <div class="app on mid"><svg viewBox="0 0 72 72"><rect width="72" height="72" rx="16.500" fill="url(#gGreen)"/><path d="M10.500 62l4-14A26 26 0 1 1 24 58.500z" fill="none" stroke="#fff" stroke-width="4" stroke-linejoin="round"/><path d="M27 23c1.500-.4 3 0 3.600 1.500l2 5c.3 1-.1 2-1 3l-1.500 2c2.500 4.600 5.500 7.400 10 9.500l2-2.600c.8-.9 1.600-1 2.500-.6l5 2.600c1 .5 1.200 1.300 1 2.500-.6 3-4 4.500-7 4.200C33 49 24 39 23 30.500c-.3-3.500 1.500-7 4-7.500z" fill="#fff"/></svg><span class="badge three">106</span></div>
    <div class="app on bright"><svg><use href="#vscode"/></svg></div>
    <i class="split sand"></i>
    <div class="thumb code"><svg width="82" height="58" viewBox="0 0 82 58"><rect width="82" height="58" rx="1.500" fill="#1d1e20"/><path d="M0 0h82v3H0z" fill="#333537"/><path d="M0 3h4v53H0z" fill="#2b2d2f"/><path d="M0 56h82v2H0z" fill="#6b2f7d"/><path d="M11 11.500h24" stroke="#c9c9c9" stroke-width="1.800"/><path d="M11 15.500h13" stroke="#777" stroke-width="1.200"/><path d="M11 20h3M45 20h10M11 34h6" stroke="#aaa"/><path d="M11 23h6M11 26h7M11 29h6M11 37h26M11 40h28M11 43h12M15 35.500h20" stroke="#2c4763"/><path d="M45 24h28M45 30h25M45 36h24M45 42h10" stroke="#47494c" stroke-width="2"/><path d="M45 22.500h3M68 30h3M64 34h3M62 38h3M45 42h3" stroke="#2f86e0" stroke-width="2"/></svg><svg class="mini"><use href="#vscode"/></svg></div>
    <div class="thumb files"><svg width="82" height="40" viewBox="0 0 82 40"><rect width="82" height="40" rx="1.500" fill="#1f2123"/><path d="M0 0h12v40H0z" fill="#3d4146"/><circle cx="2.500" cy="2.500" r="1" fill="#ee5f57"/><circle cx="5.500" cy="2.500" r="1" fill="#f4bd2e"/><path d="M3 8h6M3 12h6M3 16h6M3 20h6M3 24h6M3 28h6" stroke="#8b9096"/><path d="M19 2.500h8M42 2.500h12M62 2.500h10" stroke="#8b9096"/><g fill="#57bdf0"><path d="M15 7h6v5h-6zM25 7h6v5h-6zM45 7h6v5h-6zM15 17h6v5h-6zM25 17h6v5h-6zM45 17h6v5h-6zM15 27h6v5h-6zM25 27h6v5h-6zM35 27h6v5h-6zM55 27h6v5h-6zM25 37h6v3h-6zM35 37h6v3h-6zM45 37h6v3h-6z"/></g><g fill="#eee"><path d="M35.500 7h4.500v5h-4.500zM65 7h4.500v5H65zM35.500 17h4.500v5h-4.500zM55 17h4.500v5H55zM65 17h4.500v5H65zM45.500 27h4.500v5h-4.500zM16 37h4v3h-4z"/></g><path d="M55 7h5v5h-5zM65 27h5v5h-5z" fill="#b3513f"/><path d="M24 13.500h8" stroke="#2f7bea" stroke-width="1.500"/></svg><svg class="mini"><use href="#finder"/></svg></div>
    <div class="bin"><svg width="64" height="84" viewBox="0 0 64 84"><path d="M1 12l8 62c1 6 7 8 23 8s22-2 23-8l8-62z" fill="url(#gBin)"/><ellipse cx="32" cy="12" rx="31" ry="7" fill="#3d4043"/><path d="M5 11l6-7 5 3 5-6 6 5 5-2 2 8 5-8 6 1 3 5 8-2 4 6-8 5H14z" fill="#e9e9e9"/><path d="M10 9l6 7h-7zM26 7l4 8-9 1zM38 9l8-2-3 9zM50 8l6 4-5 3z" fill="#4c4f55"/><path d="M20 9h5v5zM44 12h5v3h-5z" fill="#2fb9c0"/><path d="M39 13l3 4h-5z" fill="#d0442f"/><path d="M1 12c0 9 62 9 62 0" fill="none" stroke="#a9adb0" stroke-width="1.200"/></svg></div>
  </footer>
</div>
</body>
</html>
```

FILE: styles.css
```css
* { box-sizing: border-box; }
html, body { margin: 0; padding: 0; }
body { width: 2560px; height: 1600px; overflow: hidden; font-family: "Liberation Sans", Arial, sans-serif; }
svg { display: block; flex: none; }
.defs { position: absolute; }
i, em { font-style: normal; }

.desktop {
  position: relative; width: 2560px; height: 1600px; overflow: hidden;
  background:
    linear-gradient(180deg, rgba(0,0,0,.75) 0, rgba(0,0,0,.55) 20px, rgba(0,0,0,0) 95px) 0 1456px / 2560px 144px no-repeat,
    linear-gradient(90deg, #cdb578 0, #c2ac70 440px, #a89462 565px, #000 600px, #000 850px, #b5a26c 860px, #b5a26c 875px, #000 900px, #000 1605px, #b5a26c 1635px, #b5a26c 1670px, #080500 1700px, #000 1915px, #b7a269 1940px, #cbb67a 2400px, #d2bc80 2560px) 0 1585px / 2560px 15px no-repeat,
    linear-gradient(90deg, #bda66b 0, #a08c58 300px, #6b5d3a 430px, #000 470px, #000 2040px, #6b5d3a 2100px, #a99560 2350px, #cbb67a 2560px) 0 1456px / 2560px 129px no-repeat,
    #c4ae71;
}

/* menu bar */
.menubar { height: 48px; display: flex; align-items: center; padding: 0 37px 0 38px; color: #f2f0ec; background: linear-gradient(90deg, #5d502f 0, #57492c 350px, #463a25 620px, #352c1c 900px, #33291a 1300px, #3c3223 1700px, #4e4229 2050px, #63542f 2400px, #68593a 2560px); font: 500 25px/45px Inter, sans-serif; text-shadow: 0 2px 4px rgba(0,0,0,.35); }
.mb-apple { margin-top: -4px; }
.mb-items { display: flex; gap: 41.500px; margin: -2px 0 0 38px; }
.mb-items b { font-weight: 700; letter-spacing: .7px; }
.tight { margin-right: -2px; }
.mb-tray { margin-left: auto; display: flex; align-items: center; }
.t-bt { margin-right: 42px; }
.t-play { margin-right: 34px; }
.t-bat { margin-right: 37px; }
.t-wifi { margin-right: 39px; }
.t-find { margin-right: 38px; }
.t-cc { margin-right: 34px; }
.t-siri { width: 28px; height: 28px; border-radius: 50%; margin-right: 33px; background: radial-gradient(circle at 55% 50%, #fff 0, rgba(160,210,255,.9) 18%, transparent 40%), conic-gradient(from 0deg, #1f8f7a, #2f6fb8 25%, #2b3a80 50%, #b0437e 65%, #c23c62 80%, #1f8f7a); }
.mb-date, .mb-time { margin-top: -2px; }
.mb-date { letter-spacing: .9px; }
.mb-time { margin-left: 14px; }

/* windows stacked behind */
.backwin { position: absolute; border-radius: 20px; }
.far { left: 900px; top: 52px; width: 1690px; height: 1415px; background: linear-gradient(180deg, #3b3b3b 0, #3b3b3b 68px, #161616 68px, #161616 1366px, #125a94 1366px, #125a94 1400px, #0f3252 1414px); border: 2px solid #000; }
.near { left: 0; top: 50px; width: 2562px; height: 1414px; background: linear-gradient(90deg, #1c5c48 0, #1c4c44 66px, #123d63 68px, #123d63 2530px, transparent 2530px); border: 2px solid #000; border-right-color: transparent; }

/* browser window */
.chrome { position: absolute; left: 0; top: 49px; width: 2545px; height: 1407px; display: flex; flex-direction: column; border-radius: 20px; overflow: hidden; background: #353535; box-shadow: 0 0 0 1px #000; }
.chrome::after { content: ""; position: absolute; inset: 0; border-radius: 20px; box-shadow: inset 0 0 0 2px rgba(255,255,255,.28); pointer-events: none; }
.tabstrip { height: 81px; flex: none; background: #000; display: flex; align-items: center; position: relative; }
.lights { display: flex; gap: 16px; margin-left: 42px; width: 138px; }
.lights i { width: 24px; height: 24px; border-radius: 50%; }
.red { background: #fe5f58; }
.amber { background: #febc3f; }
.green { background: #2bc840; }
.tabs { display: flex; height: 81px; align-items: center; color: #9a9fa6; }
.tab { width: 72px; height: 32px; border-right: 4px solid #393939; display: flex; align-items: center; justify-content: center; position: relative; }
.slim { width: 70px; }
.last { border-color: transparent; }
.light { color: #b3b3b3; }
.ring { position: absolute; width: 40px; height: 40px; left: 50%; margin-left: -20px; top: -4px; }
.tab-active { align-self: flex-end; width: 64px; height: 68px; margin-left: 4px; border-radius: 18px 18px 0 0; background: #353535; display: flex; justify-content: center; align-items: center; padding-bottom: 12px; position: relative; }
.tab-active::before, .tab-active::after { content: ""; position: absolute; bottom: 0; width: 20px; height: 20px; }
.tab-active::before { right: 100%; background: radial-gradient(circle at 0 0, transparent 19.500px, #353535 20px); }
.tab-active::after { left: 100%; background: radial-gradient(circle at 100% 0, transparent 19.500px, #353535 20px); }
.newtab { margin-left: 30px; }
.tabsearch { margin-left: auto; margin-right: 13px; width: 56px; height: 56px; border-radius: 18px; background: #353535; display: flex; align-items: center; justify-content: center; }

.toolbar { height: 92px; flex: none; display: flex; align-items: center; padding-left: 32px; background: #353535; }
.nav { margin-right: 48px; }
.nav:nth-child(3) { margin-right: 39px; margin-left: -1px; }
.omnibox { width: 1956px; height: 68px; border-radius: 34px; background: #202125; display: flex; align-items: center; padding-left: 10px; }
.siteinfo { width: 48px; height: 48px; border-radius: 50%; background: #353535; display: flex; align-items: center; justify-content: center; }
.url { margin-left: 16px; font: 400 28px/68px Inter, sans-serif; letter-spacing: -.06px; color: #9a9b9d; }
.url em { color: #fff; }
.key { margin-left: auto; margin-right: 29px; }
.star { margin-right: 32px; }
.puzzle { margin-left: 37px; }
.bar { width: 4px; height: 32px; border-radius: 2px; background: #000; margin-left: 33px; }
.dl { margin-left: 36px; }
.avatar { margin-left: 36px; }
.kebab { margin-left: 48px; }

.bookmarks { height: 68px; flex: none; display: flex; align-items: center; padding: 0 31px 12px 25px; font: 400 23.500px/56px Inter, sans-serif; color: #fff; background: #353535; }
.bm { display: flex; align-items: center; gap: 14px; }
.yt { margin-left: 35px; letter-spacing: -.4px; }
.yt svg { margin-right: -3px; }
.mp { margin-left: 35px; gap: 13px; }
.bookmarks .bar { margin-left: auto; margin-right: 32px; }
.all { gap: 16px; }

/* web page */
.page { flex: 1; display: flex; border-top: 2px solid #636263; min-height: 0; position: relative; }
.page::after { content: ""; position: absolute; left: 440px; right: 0; bottom: 0; height: 64px; background: linear-gradient(180deg, rgba(0,0,0,0), rgba(0,0,0,.09)); pointer-events: none; }
.sidebar { width: 440px; flex: none; background: #333; color: #eee; }
.brand { height: 100px; line-height: 100px; padding-left: 101px; color: #fff; font-family: Lato, sans-serif; font-style: italic; font-size: 35px; white-space: nowrap; }
.brand span { display: inline-block; transform: scaleX(.925); transform-origin: 0 50%; }
.hello { height: 142px; padding: 50px 0 0 50px; font-size: 36px; line-height: 40px; letter-spacing: -.1px; border-bottom: 2px solid #434343; }
.menu { list-style: none; margin: 0; padding: 0; }
.menu li { height: 90px; line-height: 90px; padding-left: 30px; font-size: 28px; }
.content { flex: 1; background: #f9f9f9; color: #333; font-size: 28px; position: relative; }
.topnav { height: 100px; background: #fff; border-bottom: 2px solid #eee; display: flex; justify-content: space-between; padding: 0 22px; align-items: center; }
.burger { display: flex; flex-direction: column; gap: 8px; }
.burger i { width: 44px; height: 4px; border-radius: 1px; background: #222; }
.user { display: flex; align-items: center; line-height: 40px; }
.user svg { margin-right: 10px; margin-top: -4px; }
.caret { border: 8px solid transparent; border-bottom: 0; border-top-color: #333; margin-left: 3px; margin-top: 4px; }
h1 { margin: 0; height: 143px; padding: 26px 0 0 40px; font-weight: 400; font-size: 48px; line-height: 60px; }
.card { background: #fff; height: 520px; border-top: 4px solid #c1c1c1; border-radius: 6px; box-shadow: 0 2px 3px rgba(0,0,0,.1); padding: 40px 21px 0 20px; }
.actions { display: flex; gap: 8px; }
.btn { height: 60px; border-radius: 6px; border: 2px solid #367fa9; background: #3f8fbd; color: #fff; font: 24px/56px "Liberation Sans", Arial, sans-serif; display: flex; align-items: center; padding: 0; box-shadow: inset 0 -4px 0 rgba(0,0,0,.07); }
.add { width: 220px; padding-left: 19px; gap: 6px; }
.del { width: 139px; padding-left: 20px; gap: 6px; background: #f56b5b; border-color: #f3543f; }
.controls { display: flex; align-items: center; height: 60px; margin-top: 60px; line-height: 54px; }
.controls > span { margin: -6px 0 0 8px; }
.select { width: 125px; height: 60px; border: 2px solid #ccc; display: flex; align-items: center; padding: 0 6px 0 29px; justify-content: space-between; font-size: 24px; color: #555; }
.controls label { margin-left: auto; display: flex; line-height: 54px; }
.field { width: 294px; height: 60px; border: 2px solid #ccc; margin-left: 1px; }
.table { margin-top: 22px; width: 2066px; border: 2px solid #ddd; }
.thead { display: grid; grid-template-columns: 72px 824px 698px 1fr; border-bottom: 4px solid #ddd; height: 80px; }
.cell { border-right: 2px solid #ddd; padding: 6px 0 0 17px; font-weight: 700; line-height: 70px; position: relative; display: flex; justify-content: space-between; }
.cell:last-child { border-right: 0; }
.check { padding: 24px 0 0 16px; }
.box { width: 26px; height: 26px; border: 2px solid #6f6f6f; border-radius: 5px; }
.sort { width: 16px; height: 32px; margin: 18px 11px 0 0; background: linear-gradient(#fff, #fff) 0 14px / 16px 3px no-repeat, #dcdcdc; clip-path: polygon(50% 0, 100% 50%, 50% 100%, 0 50%); }
.trow { height: 73px; background: #f2f3f5; padding-left: 16px; line-height: 73px; }
.foot { display: flex; justify-content: space-between; margin-top: 15px; line-height: 66px; }
.pager { display: flex; height: 68px; border: 2px solid #ddd; border-bottom-width: 3px; color: #777; }
.pager span { width: 107px; text-align: center; line-height: 64px; }
.pager span:first-child { width: 160px; border-right: 2px solid #ddd; }

/* extension widgets floating over the page */
.float { position: absolute; background: #202020; display: flex; align-items: center; box-shadow: 0 8px 40px rgba(0,0,0,.35); }
.clover { left: 2024px; top: 486px; width: 72px; height: 72px; border-radius: 50%; justify-content: center; }
.robot { left: 2019px; top: 574px; width: 86px; height: 72px; border-radius: 36px 0 0 36px; padding-left: 18px; }
.orb { width: 48px; height: 48px; border-radius: 50%; display: flex; align-items: center; justify-content: center; background: conic-gradient(from 0deg, #4a63f8, #4b33ee 50deg, #2fa9d8 110deg, #37b9d0 140deg, #4c66f0 190deg, #b944dd 245deg, #7a35f0 300deg, #4a63f8); }
.brain { left: 2006px; top: 1052px; width: 99px; height: 92px; border-radius: 46px 0 0 46px; border: 2px solid #3b3b45; border-right: 0; background: #1c1b33; padding-left: 28px; box-shadow: 0 6px 40px rgba(0,0,0,.2); }

/* dock */
.dock { position: absolute; left: 78px; top: 1472px; width: 2405px; height: 118px; border-radius: 34px; border: 2px solid rgba(255,255,255,.18); box-shadow: 0 0 0 1px rgba(0,0,0,.55); padding: 0 0 0 4px; display: flex; background: linear-gradient(180deg, rgba(0,0,0,.1), rgba(255,255,255,.02)), linear-gradient(90deg, #84703f 0, #7e6a3c 250px, #6a5934 360px, #4a3f2a 420px, #201f1a 530px, #29251b 680px, #161613 800px, #141412 1500px, #2b2619 1660px, #1d1c19 1780px, #2e281c 1880px, #62532f 1990px, #7d6a3e 2200px, #867244 2405px); }
.app { width: 96.030px; flex: none; position: relative; display: flex; justify-content: center; padding-top: 16px; }
.app > svg { width: 71px; height: 71px; overflow: visible; filter: drop-shadow(0 1px 2px rgba(0,0,0,.4)); }
.app.on::after { content: ""; position: absolute; left: 44px; top: 104px; width: 8px; height: 8px; border-radius: 50%; background: #9b9a96; }
.app.bright::after { background: #f9e6b8; }
.app.mid::after { background: #d0c7ac; }
.petals ellipse { mix-blend-mode: multiply; opacity: .92; }
.badge { position: absolute; top: 8px; height: 34px; border-radius: 17px; background: #ee3b39; color: #fff; font: 400 20px/34px Roboto, sans-serif; text-align: center; box-shadow: 0 1px 3px rgba(0,0,0,.4); }
.wide { left: 30px; width: 66px; }
.round { left: 62px; width: 34px; }
.three { left: 56px; width: 38px; }
.split { flex: none; width: 2px; margin: 14px 21px 14px 20px; background: #5c5a55; }
.split.sand { background: #b3a27a; }
.thumb { width: 96px; flex: none; position: relative; display: flex; justify-content: center; }
.code > svg:first-child { margin-top: 24px; }
.files > svg:first-child { margin-top: 32px; }
.mini { position: absolute; left: 61px; top: 65px; width: 27px; height: 27px; }
.bin { width: 96px; flex: none; display: flex; justify-content: center; padding-top: 9px; }
```
